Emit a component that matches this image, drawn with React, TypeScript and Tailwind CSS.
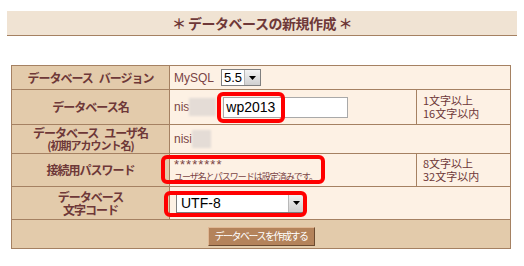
import React from 'react'

const jp = "font-['Noto_Sans_CJK_JP',sans-serif]"
const arial = "font-['Liberation_Sans','Noto_Sans_CJK_JP',sans-serif]"

function Arrow() {
  return (
    <div className="flex h-full w-[16px] items-center justify-center border-l border-[#b8b8b8] bg-gradient-to-b from-[#f4f4f4] to-[#cfcfcf]">
      <svg width="7" height="4" viewBox="0 0 7 4" aria-hidden="true">
        <path d="M0 0h7L3.5 4z" fill="#000" />
      </svg>
    </div>
  )
}

function Blur({ w }: { w: number }) {
  return <span className="inline-block h-[18px] bg-[#e4dcd6] blur-[1px]" style={{ width: w }} />
}

const Gap = () => <span className="inline-block w-[6px]" />

export default function App() {
  const label = `border border-[#a58162] bg-[#e3cbab] text-center align-middle text-[12px] font-bold leading-[14px] tracking-[-1px] text-[#6e3838] ${jp}`
  const value = 'border border-[#a58162] bg-[#fdf1e4] px-[4px] align-middle text-[#7a4444]'
  const note = `border border-[#a58162] bg-[#fdf1e4] px-[6px] align-middle text-[11px] leading-[13px] text-[#6e3838] ${jp}`

  return (
    <div className="relative h-[266px] w-[524px] bg-white pt-[11px]">
      <div className="mx-[7px] flex h-[25px] items-center justify-center border-b border-[#a58162] bg-[#f0e3d3]">
        <h1 className={`text-[14px] font-bold tracking-[-0.5px] text-[#6e3838] ${jp}`}>＊ データベースの新規作成 ＊</h1>
      </div>

      <table className="mt-[29px] ml-[11px] w-[499px] table-fixed border-collapse">
        <colgroup>
          <col className="w-[158px]" />
          <col className="w-[247px]" />
          <col className="w-[94px]" />
        </colgroup>
        <tbody>
          <tr>
            <td className={`${label} h-[24px]`}>
              データベース<Gap />バージョン
            </td>
            <td colSpan={2} className={value}>
              <div className="flex items-center gap-[7px]">
                <span className={`text-[12px] ${arial}`}>MySQL</span>
                <div className="flex h-[17px] w-[40px] items-stretch border border-[#7f7f7f] bg-white">
                  <span className={`flex-1 pl-[2px] text-[13px] leading-[15px] text-black ${arial}`}>5.5</span>
                  <Arrow />
                </div>
              </div>
            </td>
          </tr>
          <tr>
            <td className={`${label} h-[35px]`}>データベース名</td>
            <td className={value}>
              <div className="flex items-center">
                <span className={`text-[12px] ${arial}`}>nis</span>
                <Blur w={27} />
                <div className={`ml-[7px] flex h-[21px] w-[125px] items-center border border-[#a9a9a9] bg-white pl-[2px] text-[14px] text-black ${arial}`}>
                  wp2013
                </div>
              </div>
            </td>
            <td className={note}>
              1文字以上<br />16文字以内
            </td>
          </tr>
          <tr>
            <td className={`${label} h-[29px]`}>
              <div className="leading-[13px]">
                データベース<Gap />ユーザ名
              </div>
              <div className="text-[11px] leading-[13px]">(初期アカウント名)</div>
            </td>
            <td colSpan={2} className={value}>
              <div className="flex items-center">
                <span className={`text-[12px] ${arial}`}>nisi</span>
                <Blur w={19} />
              </div>
            </td>
          </tr>
          <tr>
            <td className={`${label} h-[33px]`}>接続用パスワード</td>
            <td className={`${value} ${jp}`}>
              <div className={`pt-[2px] text-[13px] leading-[11px] tracking-[1px] ${arial}`}>********</div>
              <div className="text-[9px] leading-[14px] tracking-[-1px]">ユーザ名とパスワードは設定済みです。</div>
            </td>
            <td className={note}>
              8文字以上<br />32文字以内
            </td>
          </tr>
          <tr>
            <td className={`${label} h-[33px]`}>
              <div className="leading-[13px]">データベース</div>
              <div className="leading-[13px]">文字コード</div>
            </td>
            <td colSpan={2} className={value}>
              <div className="ml-[2px] flex h-[20px] w-[129px] items-stretch border border-[#7f7f7f] bg-white">
                <span className={`flex-1 pl-[4px] text-[14px] leading-[18px] text-black ${arial}`}>UTF-8</span>
                <Arrow />
              </div>
            </td>
          </tr>
          <tr>
            <td colSpan={3} className="h-[29px] border border-[#a58162] bg-[#e3cbab] text-center align-middle">
              <button
                className={`h-[19px] w-[107px] border border-t-[#e0b894] border-l-[#e0b894] border-r-[#6b4a2f] border-b-[#6b4a2f] bg-[#b4835b] text-[10px] leading-[16px] tracking-[-1.5px] text-white ${jp}`}
              >
                データベースを作成する
              </button>
            </td>
          </tr>
        </tbody>
      </table>

      {/* red annotation boxes */}
      <div className="absolute left-[217px] top-[92px] h-[31px] w-[68px] rounded-[6px] border-[4px] border-[#ff0000]" />
      <div className="absolute left-[161px] top-[155px] h-[29px] w-[164px] rounded-[6px] border-[4px] border-[#ff0000]" />
      <div className="absolute left-[164px] top-[191px] h-[26px] w-[143px] rounded-[6px] border-[4px] border-[#ff0000]" />
    </div>
  )
}
